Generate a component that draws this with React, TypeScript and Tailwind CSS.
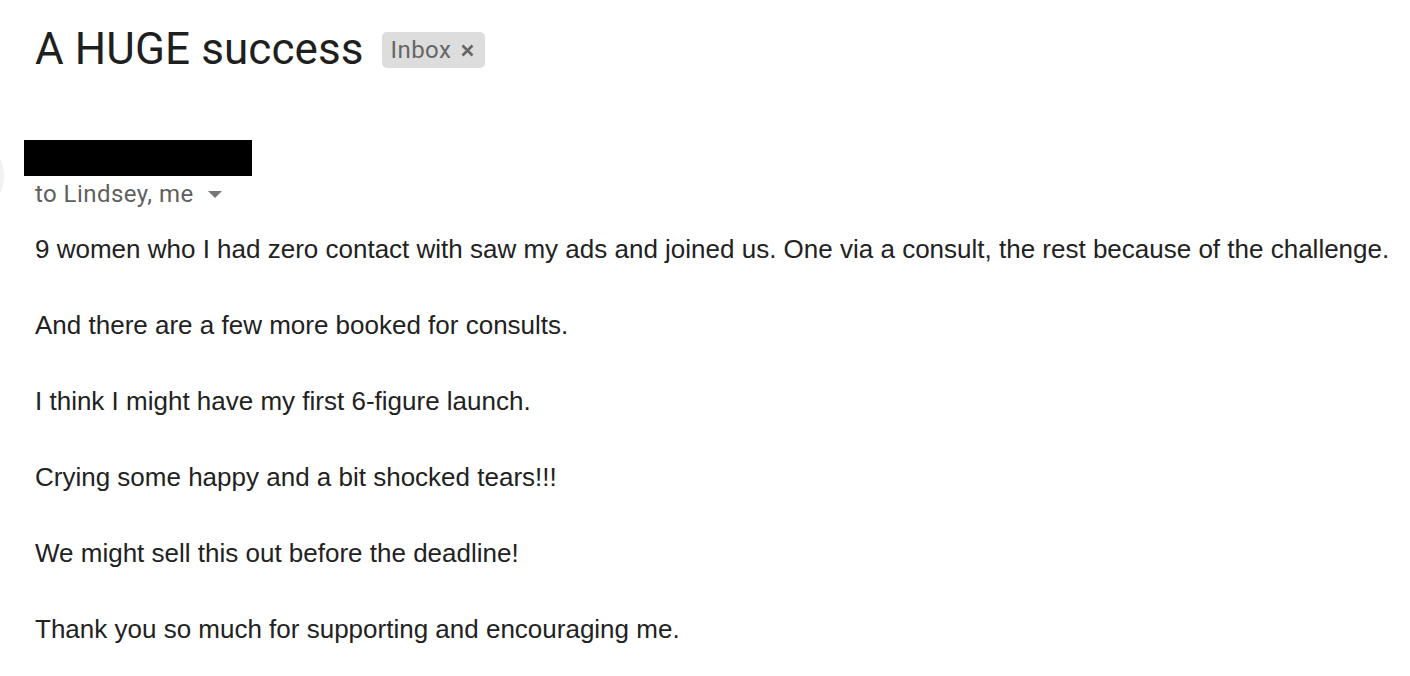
import React from "react";

const paragraphs = [
  "9 women who I had zero contact with saw my ads and joined us. One via a consult, the rest because of the challenge.",
  "And there are a few more booked for consults.",
  "I think I might have my first 6-figure launch.",
  "Crying some happy and a bit shocked tears!!!",
  "We might sell this out before the deadline!",
  "Thank you so much for supporting and encouraging me.",
];

export default function App() {
  return (
    <div className="relative w-[1410px] h-[676px] overflow-hidden bg-white">
      {/* avatar partially offscreen */}
      <div className="absolute left-[-78px] top-[135px] w-[82px] h-[82px] rounded-full bg-[#f1f1f1]" />

      <div className="pl-[35px] pt-[22px]">
        {/* subject row */}
        <div className="flex items-center h-[54px]">
          <h1 className="text-[44px] leading-[54px] text-[#1f1f1f] font-normal tracking-[0.1px]" style={{ fontFamily: "Roboto, 'Noto Sans', sans-serif" }}>
            A HUGE success
          </h1>
          <div className="ml-[18px] mt-[2px] flex items-center h-[36px] rounded-[5px] bg-[#dddddd] pl-[9px] pr-[11px] gap-[10px]" style={{ fontFamily: "Roboto, sans-serif" }}>
            <span className="text-[24px] leading-[36px] text-[#666666] tracking-[0.4px]">Inbox</span>
            <svg width="13" height="13" viewBox="0 0 13 13" className="mt-[1px]">
              <path d="M1.5 1.5 L11.5 11.5 M11.5 1.5 L1.5 11.5" stroke="#666666" strokeWidth="2.6" strokeLinecap="butt" />
            </svg>
          </div>
        </div>
      </div>

      {/* sender */}
      <div className="mt-[64px] ml-[24px] w-[228px] h-[36px] bg-black" />
      <div className="ml-[35px] mt-[2px] flex items-center h-[32px]" style={{ fontFamily: "Roboto, sans-serif" }}>
        <span className="text-[24px] leading-[32px] text-[#5f5f5f] tracking-[0.45px]">to Lindsey, me</span>
        <svg width="14" height="7" viewBox="0 0 14 7" className="ml-[14px] mt-[1px]">
          <path d="M0 0 L14 0 L7 7 Z" fill="#777777" />
        </svg>
      </div>

      {/* body */}
      <div className="ml-[35px] mt-[24px] flex flex-col gap-[46px] text-[26px] leading-[30px] text-[#222222]" style={{ fontFamily: "'Liberation Sans', Arial, sans-serif" }}>
        {paragraphs.map((p, i) => (
          <div key={i} className="whitespace-nowrap">{p}</div>
        ))}
      </div>
    </div>
  );
}
